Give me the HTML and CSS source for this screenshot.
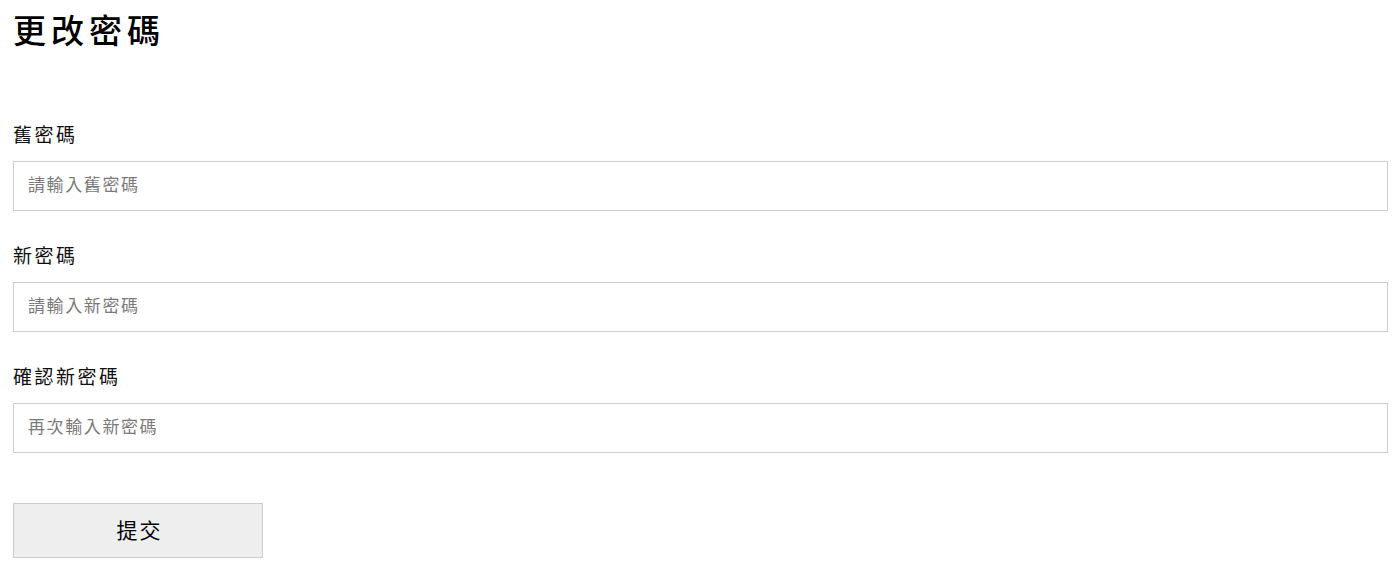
FILE: index.html
```html
<!DOCTYPE html>
<html lang="zh-Hant">
<head>
<meta charset="utf-8">
<title>更改密碼</title>
<link rel="stylesheet" href="styles.css">
</head>
<body>
<div class="page">
  <h1 class="title">更改密碼</h1>
  <form class="form">
    <div class="field">
      <label class="label" for="old">舊密碼</label>
      <input class="input" id="old" type="password" placeholder="請輸入舊密碼">
    </div>
    <div class="field">
      <label class="label" for="new">新密碼</label>
      <input class="input" id="new" type="password" placeholder="請輸入新密碼">
    </div>
    <div class="field">
      <label class="label" for="confirm">確認新密碼</label>
      <input class="input" id="confirm" type="password" placeholder="再次輸入新密碼">
    </div>
    <button class="submit" type="button">提交</button>
  </form>
</div>
</body>
</html>
```
FILE: styles.css
```css
html, body {
  margin: 0;
  padding: 0;
  background: #fff;
}
body {
  font-family: "Noto Sans CJK TC", "Noto Sans", sans-serif;
  color: #000;
}
.page {
  padding: 9px 13px 0 13px;
}
.title {
  margin: 0;
  font-size: 33px;
  line-height: 40px;
  font-weight: 500;
  letter-spacing: 5px;
}
.form {
  display: flex;
  flex-direction: column;
  margin-top: 73px;
}
.field {
  display: flex;
  flex-direction: column;
  gap: 15px;
  margin-bottom: 32px;
}
.label {
  font-size: 19px;
  line-height: 24px;
  letter-spacing: 2.5px;
  color: #111;
}
.input {
  box-sizing: border-box;
  height: 50px;
  width: 1375px;
  border: 1px solid #cccccc;
  padding: 0 14px 5px 14px;
  font-family: inherit;
  font-size: 17px;
  letter-spacing: 1.6px;
  outline: none;
  margin: 0;
}
.input::placeholder {
  color: #7a7a7a;
}
.submit {
  box-sizing: border-box;
  margin-top: 18px;
  width: 250px;
  height: 55px;
  background: #eeeeee;
  border: 1px solid #cccccc;
  font-family: inherit;
  font-size: 21px;
  letter-spacing: 2px;
  padding: 0 0 4px 3px;
  color: #000;
}
```
